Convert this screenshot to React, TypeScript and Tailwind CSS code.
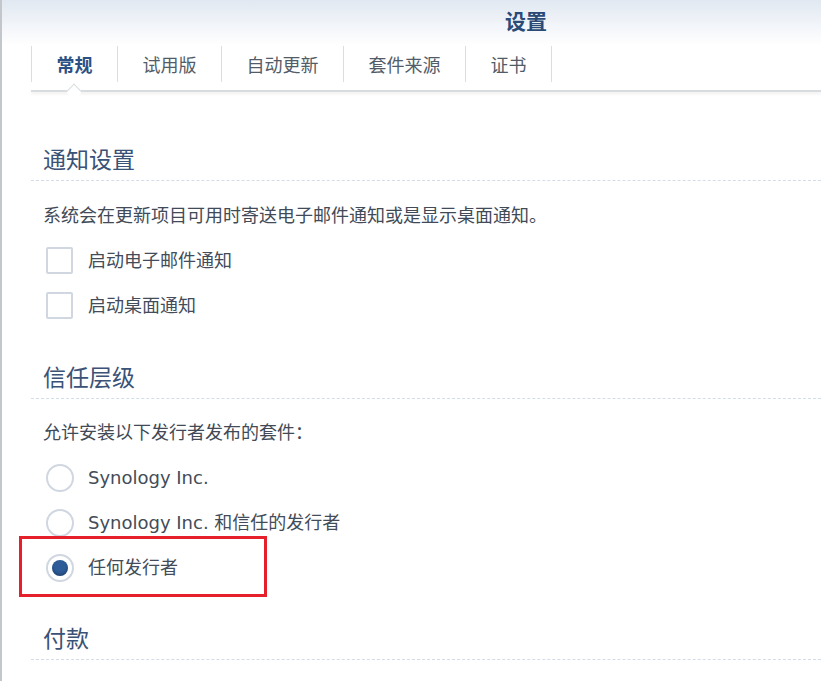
import React from 'react';

const tabs = ['常规', '试用版', '自动更新', '套件来源', '证书'];

const SectionTitle: React.FC<{ title: string; className?: string }> = ({ title, className }) => (
  <div className={className}>
    <div className="pl-3 text-[23px] leading-[30px] text-[#3a5276]">{title}</div>
    <div className="mt-[5px] border-t border-dashed border-[#d3dde9]" />
  </div>
);

const Checkbox: React.FC<{ label: string }> = ({ label }) => (
  <div className="flex items-center h-[45px] pl-[15px]">
    <div className="w-[27px] h-[27px] rounded-[2px] border-2 border-[#d0d7e1] bg-white" />
    <span className="ml-[15px] text-[18px] text-[#434c58]">{label}</span>
  </div>
);

const Radio: React.FC<{ label: string; checked?: boolean }> = ({ label, checked }) => (
  <div className="flex items-center h-[45px] pl-[15px]">
    <div className="w-[28px] h-[28px] rounded-full border-2 border-[#d0d7e1] bg-white flex items-center justify-center">
      {checked && <div className="w-[16px] h-[16px] rounded-full bg-[#2d5c99] shadow-[inset_0_-2px_3px_rgba(0,0,0,0.25)]" />}
    </div>
    <span className="ml-[14px] text-[18px] text-[#434c58]">{label}</span>
  </div>
);

export default function App() {
  return (
    <div
      className="w-[821px] h-[681px] overflow-hidden bg-white border-l-2 border-[#c3c7cc]"
      style={{ fontFamily: '"DejaVu Sans", "Noto Sans CJK SC", sans-serif' }}
    >
      {/* header */}
      <div className="h-[45px] bg-gradient-to-b from-[#e1e8f1] to-white flex items-center pl-[503px]">
        <span className="text-[21px] font-bold text-[#2a4a78]">设置</span>
      </div>

      {/* tabs */}
      <div className="ml-[29px]">
        <div className="flex h-[36px] mt-[1px]">
          {tabs.map((t, i) => (
            <div
              key={t}
              className={`flex items-center pt-[2px] px-[24.5px] border-l border-[#d5dee9] ${i === tabs.length - 1 ? 'border-r' : ''}`}
            >
              <span
                className={
                  i === 0
                    ? 'text-[18px] font-bold text-[#2b5185]'
                    : 'text-[18px] text-[#525c68]'
                }
              >
                {t}
              </span>
            </div>
          ))}
        </div>
        <div className="relative h-[10px]">
          <div className="absolute left-0 right-0 top-[8px] h-[2px] bg-[#d9dcdf] shadow-[0_2px_3px_rgba(0,0,0,0.08)]" />
          <div className="absolute left-[37px] top-[4px] w-[12px] h-[12px] rotate-45 bg-white border-l border-t border-[#d9dcdf]" />
        </div>
      </div>

      {/* content */}
      <div className="ml-[29px]">
        <SectionTitle title="通知设置" className="mt-[53px]" />
        <div className="pl-3 mt-[22px] text-[18px] leading-[26px] text-[#414a56]">
          系统会在更新项目可用时寄送电子邮件通知或是显示桌面通知。
        </div>
        <div className="mt-[9px]">
          <Checkbox label="启动电子邮件通知" />
          <Checkbox label="启动桌面通知" />
        </div>

        <SectionTitle title="信任层级" className="mt-[35px]" />
        <div className="pl-3 mt-[21px] text-[18px] leading-[26px] text-[#414a56]">
          允许安装以下发行者发布的套件：
        </div>
        <div className="mt-[9px]">
          <Radio label="Synology Inc." />
          <Radio label="Synology Inc. 和信任的发行者" />
          <div className="relative">
            <Radio label="任何发行者" checked />
            <div className="absolute left-[-12px] top-[-9px] w-[248px] h-[61px] border-[3px] border-[#e5202b]" />
          </div>
        </div>

        <SectionTitle title="付款" className="mt-[34px]" />
      </div>
    </div>
  );
}
